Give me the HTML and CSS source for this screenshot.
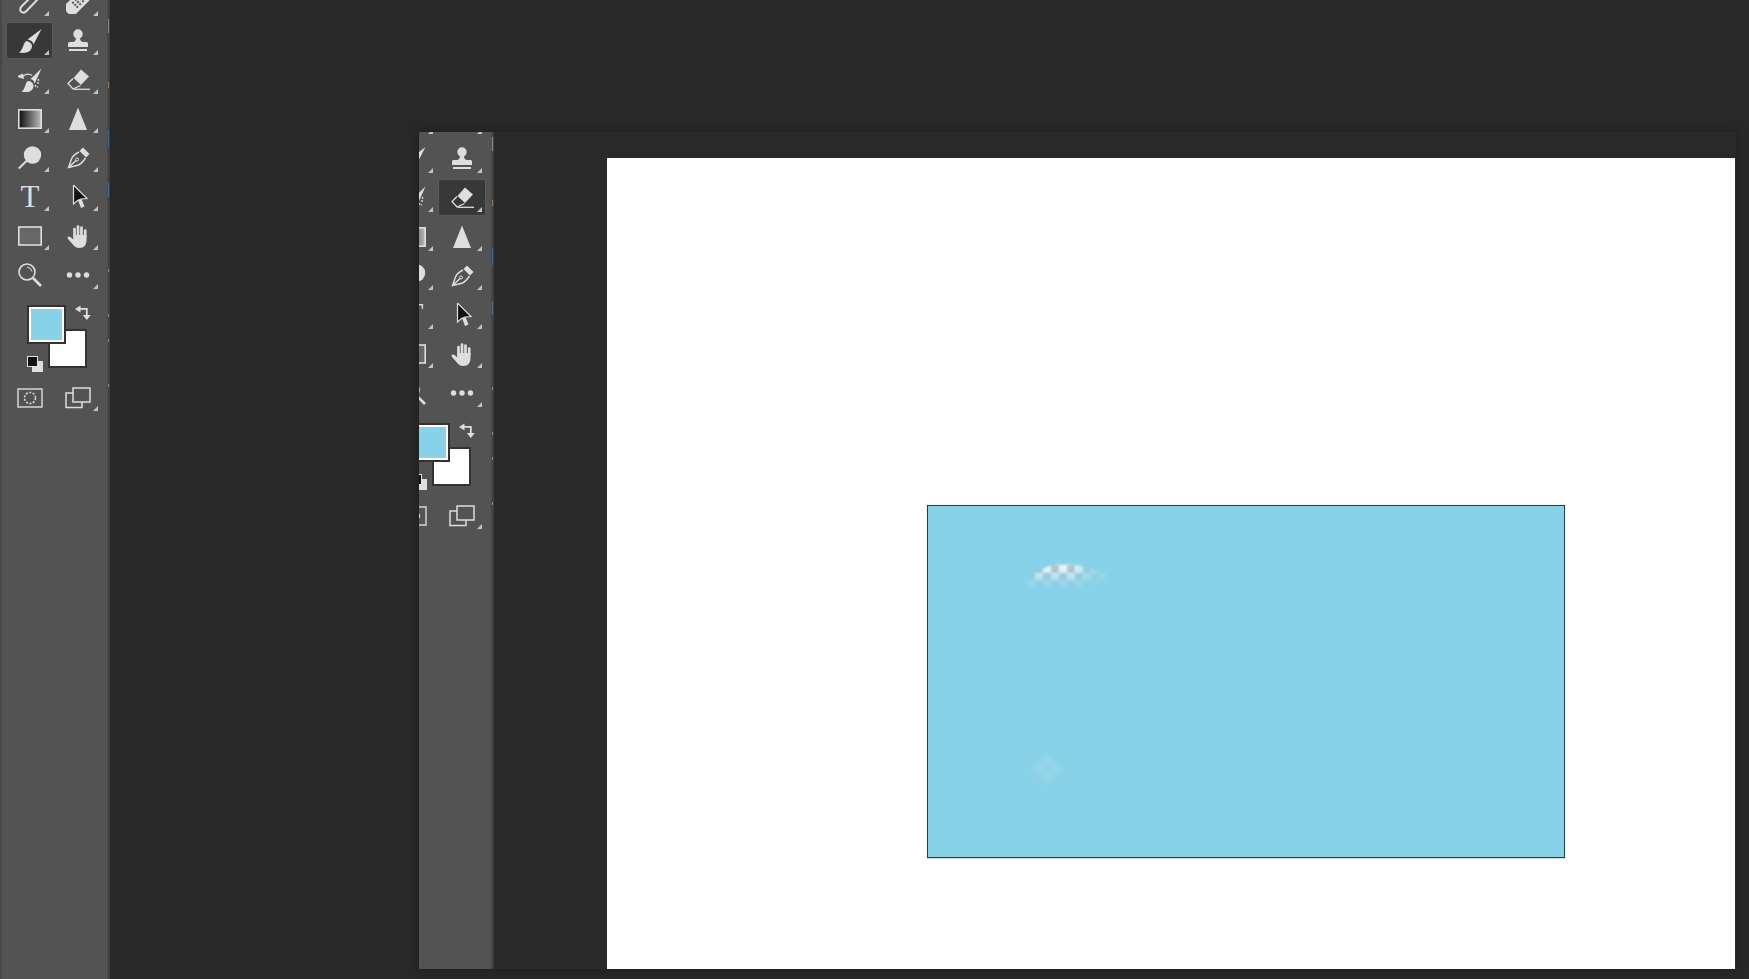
FILE: index.html
```html
<!DOCTYPE html>
<html lang="en">
<head>
<meta charset="utf-8">
<title>Canvas</title>
<link rel="stylesheet" href="styles.css">
</head>
<body>
<svg class="defs" width="0" height="0" aria-hidden="true">
  <defs>
    <linearGradient id="grad"><stop offset="0" stop-color="#0c0c0c"/><stop offset="1" stop-color="#bdbdbd"/></linearGradient>
    <symbol id="i-drop" viewBox="0 0 24 24"><path d="M15 5 3.500 16.500C1.500 18.500 2 21 3.500 22S7 22.500 8.500 21L20 9" fill="none" stroke="currentColor" stroke-width="2"/><path d="M14 3 21 10 24 6 18 0Z" fill="currentColor"/></symbol>
    <symbol id="i-heal" viewBox="0 0 24 24"><rect x="5" y="-3" width="14" height="30" rx="3" transform="rotate(45 12 12)" fill="currentColor"/><g fill="#535353" transform="rotate(45 12 12)"><rect x="8" y="7" width="2" height="2"/><rect x="11" y="7" width="2" height="2"/><rect x="14" y="7" width="2" height="2"/><rect x="8" y="11" width="2" height="2"/><rect x="11" y="11" width="2" height="2"/><rect x="14" y="11" width="2" height="2"/><rect x="8" y="15" width="2" height="2"/><rect x="11" y="15" width="2" height="2"/><rect x="14" y="15" width="2" height="2"/></g></symbol>
    <symbol id="i-brush" viewBox="0 0 24 24"><path d="M23.500 0 9.500 10.500Q15 11.500 15.500 15.500Z" fill="currentColor"/><path d="M9 12C4.500 13 6.500 19.500 1 23.500 8.500 25 15 22 13.800 15.800Q12.800 13 9 12Z" fill="currentColor"/></symbol>
    <symbol id="i-stamp" viewBox="0 0 24 24"><circle cx="12" cy="5" r="4.700" fill="currentColor"/><path d="M10 8h4c0 3 .5 4.500 3 5h3.500q1.500 0 1.500 1.500V18H2v-3.500Q2 13 3.500 13H7c2.500-.5 3-2 3-5Z" fill="currentColor"/><rect x="3" y="20" width="18" height="2" fill="currentColor"/></symbol>
    <symbol id="i-smudge" viewBox="0 0 24 24"><path d="M23.500 .5 12.500 11Q16.500 12 16.500 16Z" fill="currentColor"/><path d="M10.500 13C6.500 14 8.500 20 3 24.500 10.500 25.500 16.500 22.500 15.300 16.500 14.500 14.500 12.500 13 10.500 13Z" fill="currentColor"/><path d="M14 7.500C11.500 5.500 8.500 5.500 5 8" fill="none" stroke="currentColor" stroke-width="1.300"/><path d="M-2 8.500 5 5.500 6 11Z" fill="currentColor"/><g fill="currentColor"><circle cx="20.500" cy="12" r=".9"/><circle cx="20" cy="15" r=".9"/><circle cx="17.500" cy="18" r=".9"/><circle cx="19.500" cy="19" r=".7"/></g></symbol>
    <symbol id="i-eraser" viewBox="0 0 24 24"><path d="M15 1.500 23 8.500 15 17 7.500 10Z" fill="currentColor"/><path d="M7 10.500 2 15.500 7 21 14.500 17.500" fill="none" stroke="currentColor" stroke-width="1.300"/><path d="M8 21.300H24" stroke="currentColor" stroke-width="1.300"/></symbol>
    <symbol id="i-grad" viewBox="0 0 24 24"><rect x=".8" y="2.800" width="22.400" height="18.400" fill="url(#grad)" stroke="currentColor" stroke-width="1.600"/></symbol>
    <symbol id="i-sharpen" viewBox="0 0 24 24"><path d="M12 .5 21 23H3Z" fill="currentColor"/></symbol>
    <symbol id="i-dodge" viewBox="0 0 24 24"><circle cx="14.500" cy="9" r="8.700" fill="currentColor"/><path d="M.8 22.500 9 14.500" stroke="currentColor" stroke-width="2"/></symbol>
    <symbol id="i-pen" viewBox="0 0 24 24"><path d="M17 1.500 23.500 8 20 11.500 13.500 5Z" fill="currentColor"/><path d="M13 6C9 8 6.500 10 5.500 13L2.500 21.500 11 19.500C15 18.500 17.500 15 19.500 12M3 21 10 14.500" fill="none" stroke="currentColor" stroke-width="1.400"/><circle cx="11" cy="13.500" r="1.500" fill="none" stroke="currentColor" stroke-width="1"/></symbol>
    <symbol id="i-arrow" viewBox="0 0 24 24"><path d="M12 15 15 23 18.500 21.500 15.500 14Z" fill="currentColor"/><path d="M7.500 0V19L11.500 15.500 15 14 21 13.500Z" fill="#111" stroke="currentColor" stroke-width="1.200"/></symbol>
    <symbol id="i-rect" viewBox="0 0 24 24"><rect x=".8" y="3" width="22.400" height="18" fill="#686868" stroke="currentColor" stroke-width="1.600"/></symbol>
    <symbol id="i-hand" viewBox="0 0 24 24"><g stroke="currentColor" stroke-width="2.700" stroke-linecap="round"><path d="M8.500 12V5M12 12V2.500M15.500 12V3.500M19.200 13V6.500"/></g><path d="M7.200 11H20.500V16C20.500 21 18 24 13.500 24 10 24 8 22 6 19.500L2 15C.5 13 2.500 11.500 4.500 13L7.200 15.500Z" fill="currentColor"/></symbol>
    <symbol id="i-zoom" viewBox="0 0 24 24"><circle cx="9" cy="9" r="8" fill="none" stroke="currentColor" stroke-width="1.600"/><path d="M15 15 23 23" stroke="currentColor" stroke-width="2.600"/><path d="M9 4Q13 4.500 14 8.500" fill="none" stroke="currentColor" stroke-width="1"/></symbol>
    <symbol id="i-more" viewBox="0 0 24 24"><g fill="currentColor"><circle cx="3.500" cy="12" r="2.700"/><circle cx="12" cy="12" r="2.700"/><circle cx="20.500" cy="12" r="2.700"/></g></symbol>
    <symbol id="i-swap" viewBox="0 0 16 16"><path d="M4 3.800H11.800V10" fill="none" stroke="currentColor" stroke-width="1.800"/><path d="M0 4 5.500 .5V7.500ZM7.800 10H15.800L11.800 15Z" fill="currentColor"/></symbol>
    <symbol id="i-mask" viewBox="0 0 26 22"><rect x="1" y="2" width="24" height="18" fill="none" stroke="currentColor" stroke-width="1.400"/><circle cx="13" cy="11" r="5.500" fill="none" stroke="currentColor" stroke-width="1.500" stroke-dasharray="2 1.500"/></symbol>
    <symbol id="i-screen" viewBox="0 0 26 22"><rect x="1" y="6" width="16" height="14.500" fill="none" stroke="currentColor" stroke-width="1.500"/><rect x="8" y="1" width="17" height="14" fill="#535353" stroke="currentColor" stroke-width="1.500"/></symbol>
    <pattern id="check" x="3" y="3" width="16" height="16" patternUnits="userSpaceOnUse"><rect width="16" height="16" fill="#f3f8fa"/><rect width="8" height="8" fill="#b4c3ca"/><rect x="8" y="8" width="8" height="8" fill="#b4c3ca"/></pattern>
    <linearGradient id="fadeY" gradientUnits="userSpaceOnUse" x1="0" y1="56" x2="0" y2="82"><stop offset="0" stop-color="#fff"/><stop offset=".3" stop-color="#fff" stop-opacity=".85"/><stop offset=".65" stop-color="#fff" stop-opacity=".35"/><stop offset="1" stop-color="#fff" stop-opacity="0"/></linearGradient>
    <linearGradient id="fadeX" gradientUnits="userSpaceOnUse" x1="90" y1="0" x2="186" y2="0"><stop offset="0" stop-color="#fff" stop-opacity=".4"/><stop offset=".2" stop-color="#fff" stop-opacity=".95"/><stop offset=".58" stop-color="#fff"/><stop offset=".72" stop-color="#fff" stop-opacity=".45"/><stop offset="1" stop-color="#fff" stop-opacity="0"/></linearGradient>
    <mask id="arcFadeY" maskUnits="userSpaceOnUse" x="80" y="40" width="130" height="60"><rect x="80" y="40" width="130" height="60" fill="url(#fadeY)"/></mask>
    <mask id="arcFadeX" maskUnits="userSpaceOnUse" x="80" y="40" width="130" height="60"><rect x="80" y="40" width="130" height="60" fill="url(#fadeX)"/></mask>
    <filter id="soft" x="-20%" y="-20%" width="140%" height="140%"><feGaussianBlur stdDeviation=".8"/></filter>
    <filter id="softer" x="-50%" y="-50%" width="200%" height="200%"><feGaussianBlur stdDeviation="2.500"/></filter>
  </defs>
</svg>

<aside class="panel panel-main">
  <div class="panel-inner">
    <div class="tools-col">
      <div class="tools">
        <div class="tool fly"><svg class="ic"><use href="#i-drop"/></svg></div>
        <div class="tool fly"><svg class="ic"><use href="#i-heal"/></svg></div>
        <div class="tool fly active"><svg class="ic"><use href="#i-brush"/></svg></div>
        <div class="tool fly"><svg class="ic"><use href="#i-stamp"/></svg></div>
        <div class="tool fly"><svg class="ic"><use href="#i-smudge"/></svg></div>
        <div class="tool fly"><svg class="ic"><use href="#i-eraser"/></svg></div>
        <div class="tool fly"><svg class="ic"><use href="#i-grad"/></svg></div>
        <div class="tool fly"><svg class="ic"><use href="#i-sharpen"/></svg></div>
        <div class="tool fly"><svg class="ic"><use href="#i-dodge"/></svg></div>
        <div class="tool fly"><svg class="ic"><use href="#i-pen"/></svg></div>
        <div class="tool fly"><span class="type-t">T</span></div>
        <div class="tool fly"><svg class="ic"><use href="#i-arrow"/></svg></div>
        <div class="tool fly"><svg class="ic"><use href="#i-rect"/></svg></div>
        <div class="tool fly"><svg class="ic"><use href="#i-hand"/></svg></div>
        <div class="tool"><svg class="ic"><use href="#i-zoom"/></svg></div>
        <div class="tool fly"><svg class="ic"><use href="#i-more"/></svg></div>
      </div>
      <div class="swatches">
        <div class="swatch bg-swatch"></div>
        <div class="swatch fg-swatch"></div>
        <svg class="swap"><use href="#i-swap"/></svg>
        <div class="mini mini-light"></div>
        <div class="mini mini-dark"></div>
      </div>
      <div class="modes">
        <div class="tool"><svg class="ic-wide"><use href="#i-mask"/></svg></div>
        <div class="tool fly"><svg class="ic-wide"><use href="#i-screen"/></svg></div>
      </div>
    </div>
    <div class="rail">
      <i class="mark m1"></i><i class="mark m2"></i><i class="mark m3"></i><i class="mark m4"></i>
      <i class="mark m5"></i><i class="mark m6"></i><i class="mark m7"></i><i class="mark m8"></i>
    </div>
  </div>
</aside>

<section class="window">
  <aside class="panel panel-win">
    <div class="panel-inner">
      <div class="tools-col">
        <div class="tools">
          <div class="tool fly"><svg class="ic"><use href="#i-drop"/></svg></div>
          <div class="tool fly"><svg class="ic"><use href="#i-heal"/></svg></div>
          <div class="tool fly"><svg class="ic"><use href="#i-brush"/></svg></div>
          <div class="tool fly"><svg class="ic"><use href="#i-stamp"/></svg></div>
          <div class="tool fly"><svg class="ic"><use href="#i-smudge"/></svg></div>
          <div class="tool fly active"><svg class="ic"><use href="#i-eraser"/></svg></div>
          <div class="tool fly"><svg class="ic"><use href="#i-grad"/></svg></div>
          <div class="tool fly"><svg class="ic"><use href="#i-sharpen"/></svg></div>
          <div class="tool fly"><svg class="ic"><use href="#i-dodge"/></svg></div>
          <div class="tool fly"><svg class="ic"><use href="#i-pen"/></svg></div>
          <div class="tool fly"><span class="type-t">T</span></div>
          <div class="tool fly"><svg class="ic"><use href="#i-arrow"/></svg></div>
          <div class="tool fly"><svg class="ic"><use href="#i-rect"/></svg></div>
          <div class="tool fly"><svg class="ic"><use href="#i-hand"/></svg></div>
          <div class="tool"><svg class="ic"><use href="#i-zoom"/></svg></div>
          <div class="tool fly"><svg class="ic"><use href="#i-more"/></svg></div>
        </div>
        <div class="swatches">
          <div class="swatch bg-swatch"></div>
          <div class="swatch fg-swatch"></div>
          <svg class="swap"><use href="#i-swap"/></svg>
          <div class="mini mini-light"></div>
          <div class="mini mini-dark"></div>
        </div>
        <div class="modes">
          <div class="tool"><svg class="ic-wide"><use href="#i-mask"/></svg></div>
          <div class="tool fly"><svg class="ic-wide"><use href="#i-screen"/></svg></div>
        </div>
      </div>
      <div class="rail">
        <i class="mark m1"></i><i class="mark m2"></i><i class="mark m3"></i><i class="mark m4"></i>
        <i class="mark m5"></i><i class="mark m6"></i><i class="mark m7"></i><i class="mark m8"></i>
      </div>
    </div>
  </aside>
  <main class="doc-area">
    <div class="doc">
      <div class="layer">
        <svg class="holes" viewBox="0 0 636 351">
          <g filter="url(#soft)" mask="url(#arcFadeX)">
            <path d="M92 86C102 68 118 58 135 58 150 58 164 63 186 70V86Z" fill="url(#check)" mask="url(#arcFadeY)"/>
          </g>
          <g filter="url(#softer)" opacity=".14">
            <rect x="107" y="251" width="24" height="24" fill="url(#check)"/>
          </g>
        </svg>
      </div>
    </div>
  </main>
</section>
</body>
</html>
```

FILE: styles.css
```css
* { box-sizing: border-box; }

html, body {
  margin: 0;
  height: 100%;
  overflow: hidden;
  background: #282828;
}

body {
  position: relative;
  width: 1749px;
  height: 979px;
  color: #dedede;
  font-family: "Liberation Sans", Arial, sans-serif;
}

.defs { position: absolute; }

.panel {
  overflow: hidden;
  flex: none;
}

.panel-main {
  width: 110px;
  height: 979px;
}

.panel-main .panel-inner {
  box-shadow: inset 2px 0 #474747;
}

.panel-inner {
  display: flex;
  width: 110px;
  min-height: 100%;
  background: #535353;
}

.panel-win .panel-inner {
  margin-top: -14px;
  margin-left: -35px;
  min-height: calc(100% + 14px);
}

.tools-col {
  width: 107px;
  flex: none;
}

.tools {
  display: grid;
  grid-template-columns: 48px 48px;
  grid-auto-rows: 39px;
  margin: -17px 0 0 6px;
}

.tool {
  position: relative;
  display: flex;
  align-items: center;
  justify-content: center;
  color: #dedede;
}

.fly::after {
  content: "";
  position: absolute;
  right: 5px;
  bottom: 6px;
  width: 0;
  height: 0;
  border-left: 5px solid transparent;
  border-bottom: 5px solid #c4c4c4;
}

.tool:nth-child(even)::after {
  right: 4px;
}

.active::before {
  content: "";
  position: absolute;
  inset: 0 1px 2px 0;
  background: #383838;
  border: 1px solid #5a5a5a;
  border-radius: 3px;
}

.tool:nth-child(even).active::before {
  right: 0;
}

.ic {
  position: relative;
  width: 24px;
  height: 24px;
  margin-top: -2px;
  overflow: visible;
}

.ic-wide {
  width: 26px;
  height: 22px;
}

.tool:nth-child(odd) .ic-wide {
  margin-right: 1px;
}

.type-t {
  font-family: "Liberation Serif", "Times New Roman", serif;
  font-size: 31px;
  line-height: 24px;
  margin-top: -1px;
  color: #dedede;
}

.swatches {
  position: relative;
  height: 85px;
}

.swatch {
  position: absolute;
  border: 2px solid #333;
}

.fg-swatch {
  left: 27px;
  top: 10px;
  width: 39px;
  height: 39px;
  background: #87d2e8;
  box-shadow: inset 0 0 0 2px #fff;
}

.bg-swatch {
  left: 48px;
  top: 34px;
  width: 39px;
  height: 39px;
  background: #fff;
}

.swap {
  position: absolute;
  left: 75px;
  top: 10px;
  width: 16px;
  height: 16px;
  color: #dedede;
}

.mini {
  position: absolute;
  width: 11px;
  height: 11px;
}

.mini-dark {
  left: 27px;
  top: 61px;
  background: #111;
  border: 1px solid #e2e2e2;
}

.mini-light {
  left: 32px;
  top: 66px;
  background: #dedede;
}

.modes {
  display: grid;
  grid-template-columns: 48px 48px;
  grid-auto-rows: 39px;
  margin-left: 6px;
  margin-top: -2px;
}

.rail {
  position: relative;
  width: 3px;
  flex: none;
  background: #3f3f3f;
  border-left: 1px solid #4a4a4a;
}

.mark {
  position: absolute;
  left: 0;
  width: 1px;
  background: #8a8a8a;
}

.m1 { top: 19px; height: 14px; }
.m2 { top: 82px; height: 6px; background: #9a7c55; }
.m3 { top: 130px; height: 17px; background: #35698c; }
.m4 { top: 183px; height: 14px; background: #4d6d88; }
.m5 { top: 269px; height: 3px; }
.m6 { top: 314px; height: 3px; }
.m7 { top: 339px; height: 3px; }
.m8 { top: 384px; height: 3px; }

.window {
  position: absolute;
  left: 419px;
  top: 132px;
  display: flex;
  width: 1317px;
  height: 837px;
  background: #2a2a2a;
  box-shadow: 0 0 10px rgba(0, 0, 0, 0.28);
}

.panel-win {
  width: 75px;
  height: 837px;
}

.doc-area {
  flex: 1;
  padding: 26px 1px 0 113px;
}

.doc {
  height: 100%;
  padding: 347px 0 0 320px;
  background: #fff;
}

.layer {
  position: relative;
  width: 638px;
  height: 353px;
  background: #87d2e8;
  border: 1px solid #1a4150;
  box-shadow: 0 1px 1px rgba(0, 0, 0, 0.14);
}

.holes {
  position: absolute;
  inset: 0;
  width: 100%;
  height: 100%;
}
```
